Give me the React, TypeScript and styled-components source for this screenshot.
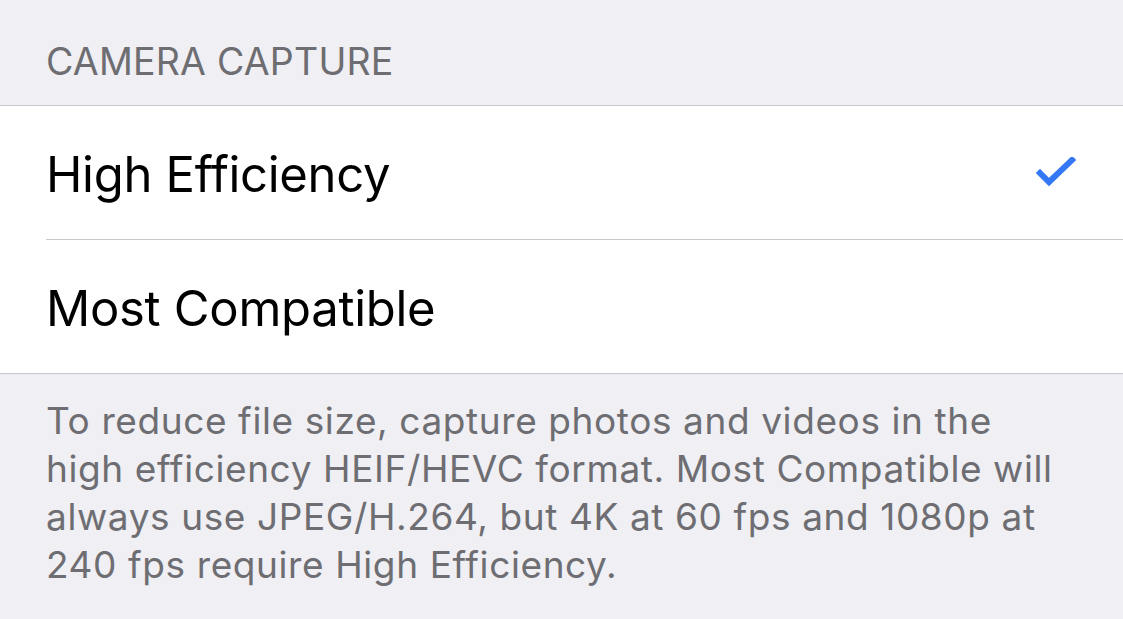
import styled, { createGlobalStyle } from "styled-components";

const GlobalStyle = createGlobalStyle`
  html, body {
    margin: 0;
    padding: 0;
    background: #efeff4;
  }
  body {
    font-family: Inter, "Noto Sans", "Liberation Sans", sans-serif;
    -webkit-font-smoothing: antialiased;
  }
`;

const Page = styled.div`
  min-height: 100vh;
  background: #efeff4;
`;

const SectionHeader = styled.div`
  height: 105px;
  box-sizing: border-box;
  padding: 40px 46px 0;
  font-size: 37.5px;
  line-height: 44px;
  color: #6d6d72;
  text-transform: uppercase;
  letter-spacing: 0.2px;
`;

const Group = styled.div`
  background: #ffffff;
  border-top: 1px solid #c8c7cc;
  border-bottom: 1px solid #c8c7cc;
`;

const Row = styled.div`
  padding-left: 46px;
`;

const RowInner = styled.div<{ $divider: boolean }>`
  display: flex;
  align-items: center;
  justify-content: space-between;
  height: 133px;
  padding-right: 46px;
  border-bottom: ${(p) => (p.$divider ? "1px solid #c8c7cc" : "none")};
`;

const Label = styled.span`
  font-size: 49px;
  color: #000000;
  letter-spacing: -0.3px;
  padding-top: 4px;
`;

const Check = styled.svg`
  width: 40px;
  height: 32px;
  margin-right: 1px;
`;

const Footer = styled.div`
  padding: 23px 55px 30px 46px;
  font-size: 37px;
  line-height: 48px;
  letter-spacing: 0.6px;
  color: #6d6d72;
`;

const options = [
  { label: "High Efficiency", selected: true },
  { label: "Most Compatible", selected: false },
];

const App = () => {
  return (
    <Page>
      <GlobalStyle />
      <SectionHeader>Camera Capture</SectionHeader>
      <Group>
        {options.map((opt, i) => (
          <Row key={opt.label}>
            <RowInner $divider={i < options.length - 1}>
              <Label>{opt.label}</Label>
              {opt.selected && (
                <Check viewBox="0 0 40 32">
                  <path
                    d="M4 16 L13 25 L36 3"
                    fill="none"
                    stroke="#3478f6"
                    strokeWidth="6"
                    strokeLinecap="square"
                  />
                </Check>
              )}
            </RowInner>
          </Row>
        ))}
      </Group>
      <Footer>
        To reduce file size, capture photos and videos in the high efficiency
        HEIF/HEVC format. Most Compatible will always use JPEG/H.264, but 4K at
        60 fps and 1080p at 240 fps require High Efficiency.
      </Footer>
    </Page>
  );
};

export default App;
